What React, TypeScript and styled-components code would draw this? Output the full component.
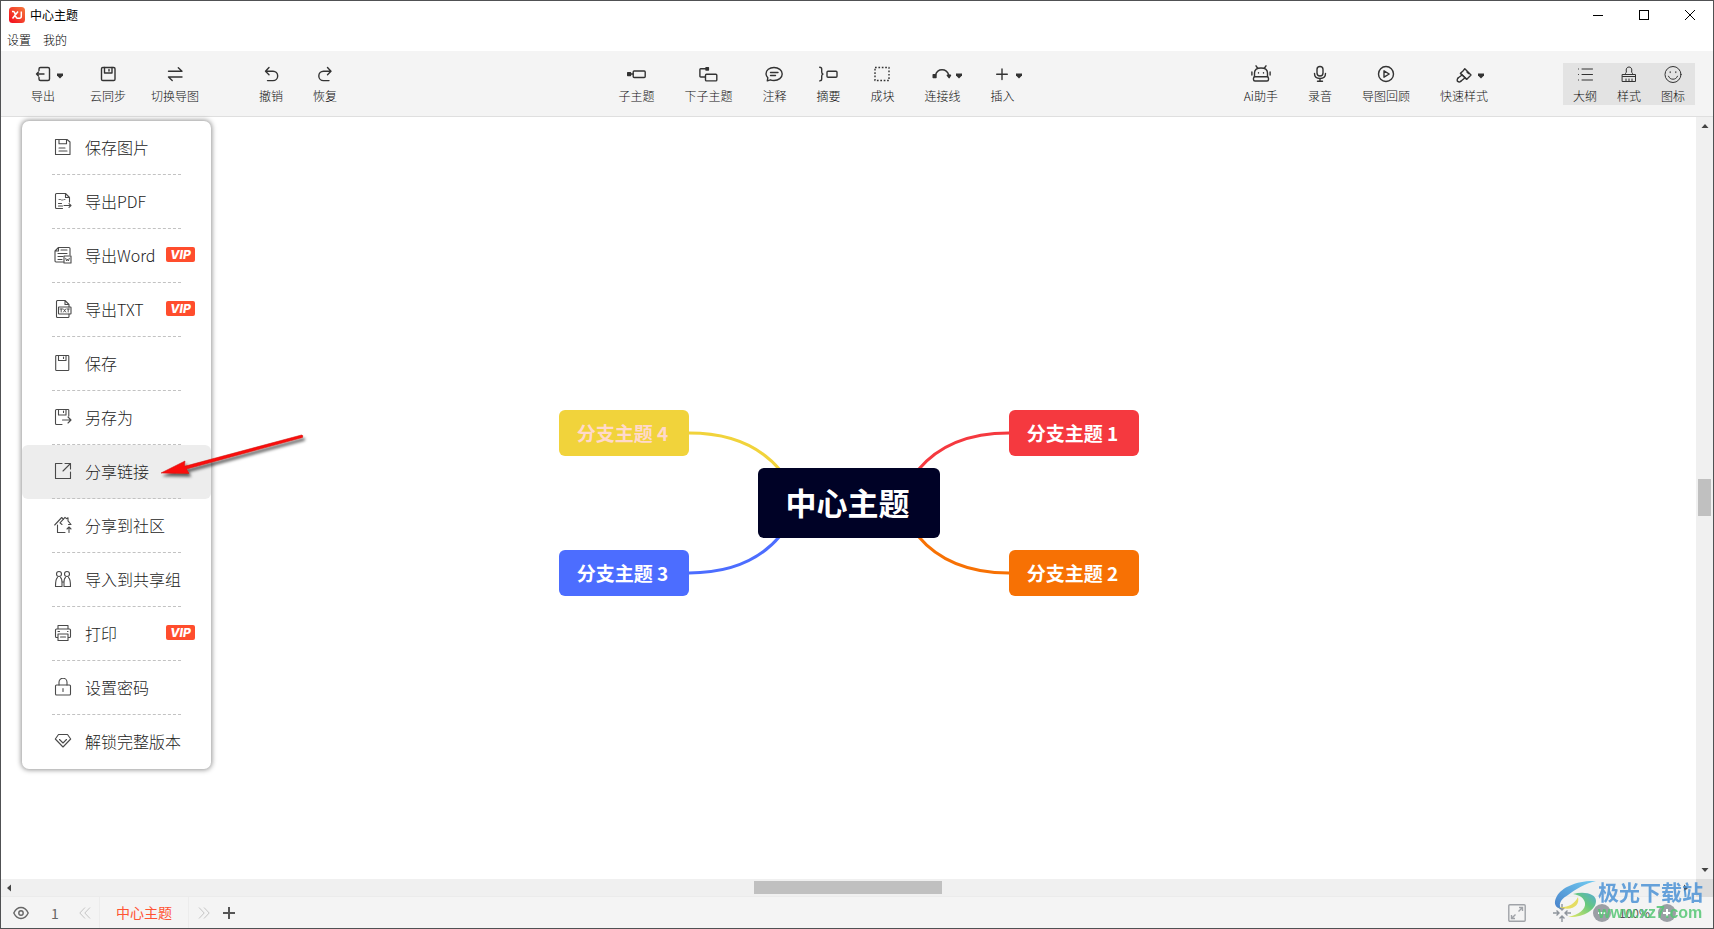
import React from "react";
import styled, { createGlobalStyle } from "styled-components";

const FONT = '"Noto Sans CJK SC", "Noto Sans", sans-serif';

const GlobalStyle = createGlobalStyle`
  *, *::before, *::after { box-sizing: border-box; }
  body { margin: 0; font-family: ${FONT}; color: #222; background: #fff; }
  button { font: inherit; color: inherit; background: none; border: 0; padding: 0; margin: 0; cursor: pointer; }
  svg { display: block; flex: none; }
`;

const Window = styled.div`
  display: flex;
  flex-direction: column;
  min-height: 100vh;
  border: 1px solid #505153;
  background: #fff;
`;

/* ---------- title and menu bar ---------- */

const TitleBar = styled.header`
  display: flex;
  align-items: center;
  height: 28px;
  padding-left: 8px;
`;

const Title = styled.h1`
  margin: 0 auto 0 5px;
  font-size: 12px;
  line-height: 16px;
  font-weight: 400;
  color: #000;
`;

const WindowButton = styled.button`
  display: flex;
  align-items: center;
  justify-content: center;
  width: 46px;
  height: 28px;
`;

const MenuBar = styled.nav`
  display: flex;
  gap: 12px;
  height: 22px;
  padding: 0 6px;
  font-size: 12px;
  font-weight: 300;
  line-height: 22px;
  color: #000;
`;

/* ---------- toolbar ---------- */

const Toolbar = styled.div`
  display: flex;
  align-items: center;
  height: 66px;
  padding: 0 18px 0 30px;
  background: #f4f4f4;
  border-bottom: 1px solid #dfdfdf;
`;

const ToolGroup = styled.div<{ $gap: number }>`
  display: flex;
  gap: ${(p) => p.$gap}px;
`;

const HistoryGroup = styled(ToolGroup)`
  margin-left: 60px;
`;

const CenterGroup = styled(ToolGroup)`
  flex: 1;
  justify-content: center;
  padding-left: 52px;
`;

const ToolButton = styled.button<{ $spaced?: boolean }>`
  display: flex;
  flex-direction: column;
  align-items: center;
  gap: 4px;
  margin-right: ${(p) => (p.$spaced ? 10 : 0)}px;
  font-size: 12px;
  font-weight: 300;
  line-height: 16px;
  white-space: nowrap;
  color: #111;
`;

const IconLine = styled.span`
  display: flex;
  align-items: center;
  justify-content: center;
  height: 20px;
`;

const Caret = styled.svg`
  margin: 4px -11px 0 3px;
`;

const PanelSwitch = styled.div`
  display: flex;
  height: 42px;
  margin-left: 75px;
  background: #e3e3e3;
`;

const PanelButton = styled(ToolButton)`
  width: 44px;
  padding-top: 1px;
`;

/* ---------- work area ---------- */

const Workspace = styled.main`
  flex: 1;
  display: grid;
  grid-template-columns: minmax(0, 1fr) 17px;
  grid-template-rows: minmax(0, 1fr) 18px;
  position: relative;
`;

const Canvas = styled.section`
  display: flex;
  align-items: center;
  justify-content: center;
  min-height: 662px;
  padding-top: 10px;
  background: #fff;
`;

const MindMap = styled.div`
  position: relative;
  width: 580px;
  height: 186px;
`;

const Links = styled.svg`
  position: absolute;
  inset: 0;
`;

const Topic = styled.div<{ $x: number; $y: number; $bg: string; $color: string }>`
  position: absolute;
  left: ${(p) => p.$x}px;
  top: ${(p) => p.$y}px;
  display: flex;
  align-items: center;
  justify-content: center;
  width: 130px;
  height: 46px;
  padding: 0 2px 1px 0;
  border-radius: 6px;
  background: ${(p) => p.$bg};
  color: ${(p) => p.$color};
  font-size: 19px;
  font-weight: 700;
  line-height: 28px;
  white-space: nowrap;
`;

const CentralTopic = styled(Topic)`
  width: 182px;
  height: 70px;
  padding-bottom: 2px;
  font-size: 31px;
  line-height: 46px;
`;

const VerticalBar = styled.div`
  display: flex;
  flex-direction: column;
  align-items: center;
  justify-content: space-between;
  padding-bottom: 1px;
  background: #f0f0f0;
`;

const HorizontalBar = styled.div`
  display: flex;
  align-items: center;
  justify-content: space-between;
  padding-right: 2px;
  background: #f0f0f0;
  border-bottom: 1px solid #ebebeb;
`;

const Corner = styled.div`
  background: #dcdcdc;
`;

const ScrollButton = styled.button`
  display: flex;
  align-items: center;
  justify-content: center;
  width: 16px;
  height: 17px;
`;

const Thumb = styled.div<{ $w: number; $h: number }>`
  width: ${(p) => p.$w}px;
  height: ${(p) => p.$h}px;
  background: #c0c0c0;
`;

/* ---------- export menu ---------- */

const ExportMenu = styled.ul`
  position: absolute;
  left: 21px;
  top: 4px;
  width: 189px;
  margin: 0;
  padding: 0;
  list-style: none;
  background: #fff;
  border-radius: 7px;
  box-shadow: 0 0 5px 1px rgba(0, 0, 0, 0.42);
`;

const MenuItem = styled.li<{ $active?: boolean }>`
  display: flex;
  flex-direction: column;
  height: 54px;
  border-radius: 6px;
  background: ${(p) => (p.$active ? "#ededed" : "transparent")};
`;

const MenuButton = styled.button`
  flex: 1;
  display: flex;
  align-items: center;
  padding: 0 16px 2px 32px;
  font-size: 16px;
  font-weight: 300;
  line-height: 24px;
  white-space: nowrap;
  color: #1c1c1c;
`;

const MenuLabel = styled.span`
  margin-left: 13px;
`;

const Divider = styled.hr`
  width: 129px;
  margin: 0 30px;
  border: 0;
  border-top: 1px dashed #c2c2c2;
`;

const Vip = styled.span`
  flex: none;
  width: 29px;
  height: 15px;
  margin-left: auto;
  border-radius: 2px;
  background: #ff4d2d;
  color: #fff;
  font: italic 800 12px/15px Inter, "Liberation Sans", sans-serif;
  text-align: center;
`;

const Pointer = styled.svg`
  position: absolute;
  left: 155px;
  top: 313px;
  pointer-events: none;
`;

/* ---------- status bar ---------- */

const StatusBar = styled.footer`
  position: relative;
  display: flex;
  align-items: center;
  height: 31px;
  padding: 0 37px 0 12px;
  background: #f4f4f4;
  color: #666;
`;

const StatusButton = styled.button`
  display: flex;
  align-items: center;
  justify-content: center;
`;

const PageNumber = styled.span`
  width: 50px;
  padding-left: 2px;
  text-align: center;
  font-size: 14px;
  line-height: 20px;
`;

const SheetTab = styled.button`
  width: 90px;
  height: 31px;
  margin-left: 8px;
  border: solid #ececec;
  border-width: 0 1px;
  font-size: 14px;
  line-height: 31px;
  color: #ff5333;
`;

const TabTools = styled.div`
  display: flex;
  gap: 13px;
  margin: 0 auto 0 9px;
`;

const ZoomTools = styled.div`
  display: flex;
  align-items: center;
`;

const CenterButton = styled(StatusButton)`
  margin: 0 22px 0 27px;
`;

const ZoomValue = styled.output`
  width: 47px;
  text-align: center;
  font-size: 12px;
  line-height: 16px;
  color: #555;
`;

const SiteMark = styled.div`
  position: absolute;
  right: 10px;
  bottom: 5px;
  display: flex;
  pointer-events: none;
  opacity: 0.85;
`;

const SiteText = styled.div`
  display: flex;
  flex-direction: column;
  margin-left: -2px;
  white-space: nowrap;
`;

const SiteName = styled.span`
  font-size: 21px;
  font-weight: 700;
  line-height: 24px;
  color: #4d93d6;
`;

const SiteUrl = styled.span`
  font: 700 16px/20px "Liberation Sans", sans-serif;
  color: #55c774;
`;

/* ---------- icons ---------- */

type IconProps = { size?: number; w?: number; color?: string; children: React.ReactNode };

const Icon = ({ size = 20, w = 1.4, color = "#333", children }: IconProps) => (
  <svg
    width={size}
    height={size}
    viewBox={`0 0 ${size} ${size}`}
    fill="none"
    stroke={color}
    strokeWidth={w}
    strokeLinecap="round"
    strokeLinejoin="round"
    aria-hidden="true"
  >
    {children}
  </svg>
);

const toolIcons: Record<string, React.ReactNode> = {
  export: (
    <>
      <path d="M6 6.500V5a1.500 1.500 0 0 1 1.500-1.500H15A1.500 1.500 0 0 1 16.500 5v10a1.500 1.500 0 0 1-1.500 1.500H7.500A1.500 1.500 0 0 1 6 15v-1.500" />
      <path d="M11 10H3.500M5.500 8l-2 2 2 2" />
    </>
  ),
  sync: (
    <>
      <rect x="3.500" y="3.500" width="13.500" height="13" rx="1.300" />
      <path d="M6.500 3.500V9h7.500V3.500M11 5.500v1.500" />
    </>
  ),
  swap: <path d="M3.500 7.200H17l-3.700-3.500M17 13H3.500l3.700 3.500" />,
  undo: <path d="M8 3.500L4.500 7.200l3.500 3.500M4.800 7.200h7.200a4.700 4.700 0 0 1 0 9.400H6.500" />,
  redo: <path d="M12.500 3.500L16 7.200l-3.500 3.500M15.700 7.200H8.500a4.700 4.700 0 0 0 0 9.400H14" />,
  sub: (
    <>
      <rect x="1.700" y="8.700" width="2.800" height="2.800" fill="#333" />
      <path d="M4 10h3" />
      <rect x="7.200" y="7" width="12" height="6.500" rx="1" />
    </>
  ),
  sibling: (
    <>
      <rect x="8" y="3.600" width="2.400" height="2.400" fill="#333" />
      <path d="M8 4.700H2.700a.8.8 0 0 0-.8.800v6.700a.8.8 0 0 0 .8.800h4.500" />
      <rect x="7.500" y="10.200" width="11.300" height="6.700" rx="1" />
    </>
  ),
  note: (
    <>
      <path d="M3.300 16.800l.5-3A6.700 6.700 0 0 1 2 10c0-3.800 3.400-6.500 8-6.500s8.200 2.700 8.200 6.500-3.600 6.500-8.200 6.500c-1.500 0-2.600-.2-3.600-.7z" />
      <path d="M6.500 8.500h7.500M6.500 11.500h5" />
    </>
  ),
  summary: (
    <>
      <path d="M1.700 3.300c1.800 0 2 .6 2 1.800v3c0 1 .4 1.700 1.300 2-.9.300-1.300 1-1.300 2v3c0 1.200-.2 1.800-2 1.800" />
      <rect x="9" y="7.200" width="10" height="6" rx="1" />
    </>
  ),
  block: <rect x="3" y="3.500" width="14" height="13" strokeDasharray="1.700 1.700" strokeLinecap="butt" />,
  relation: (
    <>
      <rect x="1.200" y="10.700" width="2.800" height="2.800" fill="#333" />
      <path d="M3.500 11C5.500 3.900 14.500 3.900 16.800 11" />
      <path d="M15.300 11.300h3.200l-1.400 2.400z" fill="#333" />
    </>
  ),
  insert: <path d="M10 5v10.500M4.700 10.200h10.600" />,
  robot: (
    <>
      <path d="M6.500 4L5 1.800M13.500 4L15 1.800" />
      <path d="M3.500 12.500V9c0-3 2.500-5 6.500-5s6.500 2 6.500 5v3.500" />
      <rect x="2.500" y="12.800" width="15" height="4.200" rx="1.500" />
      <path d="M7.500 8.700v.4M12.500 8.700v.4M.9 8v3M19.100 8v3" />
    </>
  ),
  mic: (
    <>
      <rect x="7" y="2.500" width="6" height="9.500" rx="3" />
      <path d="M4.500 9.500c0 3 2 5 5.500 5s5.500-2 5.500-5M10 14.500V17M7.500 17.200h5" />
    </>
  ),
  review: (
    <>
      <circle cx="10" cy="10" r="7.500" />
      <path d="M8 6.800v6.400l5.200-3.200z" />
    </>
  ),
  quick: (
    <>
      <path d="M10.800 4.700L17 11l-4.200 4.200-6.300-6 3-2.800z" />
      <path d="M6.500 9.500L12.500 15.200M7.800 11.200l-3.500 2.600M10.800 14l-4 3.200M13 8l1.500 1.500" />
      <path d="M4.300 13.800c-1.200 1-1.500 3-.6 3.600s2.300.6 3.100-.2" />
    </>
  ),
  outline: <path d="M7 5h10.500M7 10.500h10.500M7 16h10.500M3.500 5h.1M3.500 10.500h.1M3.500 16h.1" />,
  brush: (
    <>
      <path d="M3.500 10.500h13v7h-13zM6.500 10.500v-1c0-.6.300-1 .9-1.200L7.200 6c0-1.600 1-3 2.800-3s2.800 1.400 2.800 3l-.2 2.300c.6.2.9.6.9 1.200v1" />
      <path d="M3.500 12.500h13M7 15v2.500M10 15v2.500M13 15v2.500" />
    </>
  ),
  smile: (
    <>
      <circle cx="10" cy="10.500" r="8" />
      <path d="M5.500 12.200c.8 2 2.400 3 4.500 3s3.700-1 4.500-3M7.200 7.700v1M12.800 7.700v1" />
    </>
  ),
};

const menuIcons: Record<string, React.ReactNode> = {
  image: <path d="M1.500 1.500H13l3 2.500v12.500H1.500zM5 1.500v4.300h7.500V1.500M5 10h6M5 13h8" />,
  pdf: (
    <>
      <path d="M8.500 16.500h-6a1 1 0 0 1-1-1v-13a1 1 0 0 1 1-1h9l4 4V10M11.500 1.500v4h4M4.500 11.500h3M4.500 14h4M10 13.500h7M15 11.700l2 1.800-2 1.800" />
      <path d="M5 7.500h1.500M7.500 8h1.500M10 7.500h1" strokeWidth="0.800" />
    </>
  ),
  word: (
    <>
      <path d="M9.500 16H2a1 1 0 0 1-1-1V5l3.500-3.500H15a1 1 0 0 1 1 1V9M1 5h3.500V1.500M7 4h6M4 7.500h9M4 10.500h5M4 13.500h4" />
      <rect x="10" y="10" width="7" height="7" />
      <path d="M11.700 12.300l.9 2.700.9-2 .9 2 .9-2.700" strokeWidth="0.900" />
    </>
  ),
  txt: (
    <>
      <path d="M2.500 7V1.500a1 1 0 0 1 1-1h7.500l4 4V7M11 .5v4h4M2.500 13v3.500a1 1 0 0 0 1 1H14a1 1 0 0 0 1-1V14M2.500 7v6" />
      <rect x="4.500" y="7" width="12.500" height="7" rx="0.500" />
      <path d="M6 9h2.500M7.200 9v3M9.500 9l2.200 3M11.700 9L9.500 12M13 9h2.500M14.200 9v3" strokeWidth="0.900" />
    </>
  ),
  save: <path d="M2.500 1.500H14a.8.800 0 0 1 .8.800v13.400a.8.800 0 0 1-.8.800H2.500a.8.800 0 0 1-.8-.8V2.300a.8.800 0 0 1 .8-.8zM4.500 1.500v5h7.500v-5M9.500 3v1.500" />,
  saveAs: <path d="M8 16.500H2.500a1 1 0 0 1-1-1v-13a1 1 0 0 1 1-1H14a.8.800 0 0 1 .8.800V8M4.500 1.500v5.500H12V1.500M9.500 3v1.500M8.500 12h8.300M14 9l3 3-3 3" />,
  share: <path d="M8 1.500H1.500v15h15V10M11 1.500h5.500V7M16.500 1.500L9 9" />,
  community: (
    <>
      <path d="M3.500 9v7.500H11M.7 9l7-7.500L9.500 3.300M8 8.500L6 6.800 11 1.300l1.500 1.400L14 1.800v3l3 3.700h-2.500" />
      <path d="M15 16.500v-5M13 13l2-2 2 2" />
    </>
  ),
  group: (
    <>
      <circle cx="5" cy="4" r="2.500" />
      <circle cx="13" cy="4" r="2.500" />
      <path d="M3.500 7.500C2 8.500 1.500 10 1.500 16.500h2.500M6.500 7.500C8 8.500 8 11 8 12.500v4H4M11.500 7.500C10 8.500 10 11 10 12.500v4h6.500c0-6.500-.5-8-2-9M8 12h2" />
    </>
  ),
  print: <path d="M4 5V1.500h10V5M4 13.500H2.500a1 1 0 0 1-1-1V6a1 1 0 0 1 1-1h13a1 1 0 0 1 1 1v6.500a1 1 0 0 1-1 1H14M4 10h10v6.500H4zM4 7.500h1.500M13.500 7.500h.5M6.500 13h5" />,
  lock: (
    <>
      <rect x="1.500" y="7" width="15" height="10" rx="1" />
      <path d="M5 7V4.200a4 4 0 0 1 8 0V7M9 10.500v3" />
    </>
  ),
  gem: <path d="M4.500 2.500h9L16.700 7 9 15 1.300 7zM5.500 7.500L9 11l3.500-3.500" />,
};

type Tool = { id: string; label: string; caret?: boolean; spaced?: boolean };

const fileTools: Tool[] = [
  { id: "export", label: "导出", caret: true, spaced: true },
  { id: "sync", label: "云同步" },
  { id: "swap", label: "切换导图" },
];
const historyTools: Tool[] = [
  { id: "undo", label: "撤销" },
  { id: "redo", label: "恢复" },
];
const editTools: Tool[] = [
  { id: "sub", label: "子主题" },
  { id: "sibling", label: "下子主题" },
  { id: "note", label: "注释" },
  { id: "summary", label: "摘要" },
  { id: "block", label: "成块" },
  { id: "relation", label: "连接线", caret: true },
  { id: "insert", label: "插入", caret: true },
];
const extraTools: Tool[] = [
  { id: "robot", label: "Ai助手" },
  { id: "mic", label: "录音" },
  { id: "review", label: "导图回顾" },
  { id: "quick", label: "快速样式", caret: true },
];
const panelTools: Tool[] = [
  { id: "outline", label: "大纲" },
  { id: "brush", label: "样式" },
  { id: "smile", label: "图标" },
];

const menuItems = [
  { id: "image", label: "保存图片" },
  { id: "pdf", label: "导出PDF" },
  { id: "word", label: "导出Word", vip: true },
  { id: "txt", label: "导出TXT", vip: true },
  { id: "save", label: "保存" },
  { id: "saveAs", label: "另存为" },
  { id: "share", label: "分享链接", active: true },
  { id: "community", label: "分享到社区" },
  { id: "group", label: "导入到共享组" },
  { id: "print", label: "打印", vip: true },
  { id: "lock", label: "设置密码" },
  { id: "gem", label: "解锁完整版本" },
];

const topics = [
  { label: "分支主题 4", x: 0, y: 0, bg: "#f1d33b", color: "#ffd9cc" },
  { label: "分支主题 1", x: 450, y: 0, bg: "#f5393f", color: "#fff" },
  { label: "分支主题 3", x: 0, y: 140, bg: "#4c6dff", color: "#fff" },
  { label: "分支主题 2", x: 450, y: 140, bg: "#f77104", color: "#fff" },
];

const ToolItem = ({ tool }: { tool: Tool }) => (
  <ToolButton type="button" $spaced={tool.spaced}>
    <IconLine>
      <Icon>{toolIcons[tool.id]}</Icon>
      {tool.caret && (
        <Caret width="8" height="6" viewBox="0 0 8 6" aria-hidden="true">
          <path d="M1 .5h6v2L4 5.500 1 2.500z" fill="#333" />
        </Caret>
      )}
    </IconLine>
    {tool.label}
  </ToolButton>
);

const Arrow = ({ turn, label }: { turn: number; label: string }) => (
  <ScrollButton type="button" aria-label={label}>
    <svg width="8" height="8" viewBox="0 0 8 8">
      <path d="M.5 6L4 2l3.500 4z" fill="#444" transform={`rotate(${turn} 4 4)`} />
    </svg>
  </ScrollButton>
);

export default function App() {
  return (
    <>
      <GlobalStyle />
      <Window>
        <TitleBar>
          <svg width="16" height="16" viewBox="0 0 16 16" aria-hidden="true">
            <defs>
              <linearGradient id="logo" x1="0" y1="1" x2="1" y2="0">
                <stop offset="0" stopColor="#f4081c" />
                <stop offset="1" stopColor="#f47a3c" />
              </linearGradient>
            </defs>
            <rect width="16" height="16" rx="3.500" fill="url(#logo)" />
            <path
              d="M3 4.500h1.300c.8 0 1 .4 1.400 1.200l1.200 4c.3 1 .7 1.500 1.500 1.500h2c1.300 0 1.900-.8 1.900-2V4.500M9 4.500L3.500 11.500"
              fill="none"
              stroke="#fff"
              strokeWidth="1.500"
            />
          </svg>
          <Title>中心主题</Title>
          <WindowButton type="button" aria-label="最小化">
            <svg width="10" height="10" viewBox="0 0 10 10"><path d="M0 5.500h10" stroke="#000" /></svg>
          </WindowButton>
          <WindowButton type="button" aria-label="最大化">
            <svg width="10" height="10" viewBox="0 0 10 10"><rect x=".5" y=".5" width="9" height="9" fill="none" stroke="#000" /></svg>
          </WindowButton>
          <WindowButton type="button" aria-label="关闭">
            <svg width="10" height="10" viewBox="0 0 10 10"><path d="M0 0l10 10M10 0L0 10" stroke="#000" /></svg>
          </WindowButton>
        </TitleBar>
        <MenuBar>
          <button type="button">设置</button>
          <button type="button">我的</button>
        </MenuBar>
        <Toolbar>
          <ToolGroup $gap={25}>{fileTools.map((t) => <ToolItem key={t.id} tool={t} />)}</ToolGroup>
          <HistoryGroup $gap={30}>{historyTools.map((t) => <ToolItem key={t.id} tool={t} />)}</HistoryGroup>
          <CenterGroup $gap={30}>{editTools.map((t) => <ToolItem key={t.id} tool={t} />)}</CenterGroup>
          <ToolGroup $gap={30}>{extraTools.map((t) => <ToolItem key={t.id} tool={t} />)}</ToolGroup>
          <PanelSwitch>
            {panelTools.map((t) => (
              <PanelButton key={t.id} type="button">
                <Icon w={1}>{toolIcons[t.id]}</Icon>
                {t.label}
              </PanelButton>
            ))}
          </PanelSwitch>
        </Toolbar>

        <Workspace>
          <Canvas>
            <MindMap>
              <Links width="580" height="186" viewBox="0 0 580 186" fill="none" strokeWidth="3" aria-hidden="true">
                <path d="M130 23C168 23 200 35 221 60" stroke="#f1d33b" />
                <path d="M450 23C412 23 380 35 359 60" stroke="#f5393f" />
                <path d="M130 163C168 163 200 151 221 126" stroke="#4c6dff" />
                <path d="M450 163C412 163 380 151 359 126" stroke="#f77104" />
              </Links>
              {topics.map((t) => (
                <Topic key={t.label} $x={t.x} $y={t.y} $bg={t.bg} $color={t.color}>{t.label}</Topic>
              ))}
              <CentralTopic $x={199} $y={58} $bg="#000226" $color="#fff">中心主题</CentralTopic>
            </MindMap>
          </Canvas>
          <VerticalBar>
            <Arrow turn={0} label="向上滚动" />
            <Thumb $w={13} $h={37} />
            <Arrow turn={180} label="向下滚动" />
          </VerticalBar>
          <HorizontalBar>
            <Arrow turn={-90} label="向左滚动" />
            <Thumb $w={188} $h={13} />
            <Arrow turn={90} label="向右滚动" />
          </HorizontalBar>
          <Corner />

          <ExportMenu>
            {menuItems.map((m, i) => (
              <MenuItem key={m.id} $active={m.active}>
                <MenuButton type="button">
                  <Icon size={18} w={1.1} color="#4a4a4a">{menuIcons[m.id]}</Icon>
                  <MenuLabel>{m.label}</MenuLabel>
                  {m.vip && <Vip>VIP</Vip>}
                </MenuButton>
                {i < menuItems.length - 1 && <Divider />}
              </MenuItem>
            ))}
          </ExportMenu>
          <Pointer width="160" height="60" viewBox="0 0 160 60" aria-hidden="true">
            <defs>
              <filter id="drop" x="-10%" y="-20%" width="120%" height="160%">
                <feDropShadow dx="2" dy="3" stdDeviation="1.800" floodColor="#000" floodOpacity="0.600" />
              </filter>
            </defs>
            <path d="M5 43L29 31 28.500 36.300 145.500 5Q147.500 5 146.500 7.500L30.500 39 33 43.500z" fill="#fb0f0a" stroke="#c80d08" strokeWidth=".5" filter="url(#drop)" />
          </Pointer>
        </Workspace>

        <StatusBar>
          <StatusButton type="button" aria-label="预览">
            <svg width="16" height="14" viewBox="0 0 16 14" fill="none" stroke="#666" strokeWidth="1.400">
              <path d="M.8 7C2.500 3.500 5 1.500 8 1.500S13.500 3.500 15.200 7C13.500 10.500 11 12.500 8 12.500S2.500 10.500.8 7z" />
              <circle cx="8" cy="7" r="2.200" />
            </svg>
          </StatusButton>
          <PageNumber>1</PageNumber>
          <StatusButton type="button" aria-label="上一页">
            <svg width="12" height="12" viewBox="0 0 12 12" fill="none" stroke="#c4c4c4"><path d="M6 .5L.8 6 6 11.500M11 .5L5.800 6l5.200 5.500" /></svg>
          </StatusButton>
          <SheetTab type="button">中心主题</SheetTab>
          <TabTools>
            <StatusButton type="button" aria-label="下一页">
              <svg width="12" height="12" viewBox="0 0 12 12" fill="none" stroke="#c4c4c4"><path d="M1 .5L6.200 6 1 11.500M6 .5L11.200 6 6 11.500" /></svg>
            </StatusButton>
            <StatusButton type="button" aria-label="新建画布">
              <svg width="12" height="12" viewBox="0 0 12 12" stroke="#555" strokeWidth="2"><path d="M0 6h12M6 0v12" /></svg>
            </StatusButton>
          </TabTools>
          <ZoomTools>
            <StatusButton type="button" aria-label="全屏">
              <svg width="18" height="18" viewBox="0 0 18 18" fill="none" stroke="#a0a3a8" strokeWidth="1.400">
                <rect x=".8" y=".8" width="16.400" height="16.400" rx="1" />
                <path d="M10.500 7.500l4-4M11 3.500h3.500V7M7.500 10.500l-4 4M3.500 11v3.500H7" />
              </svg>
            </StatusButton>
            <CenterButton type="button" aria-label="居中">
              <svg width="18" height="18" viewBox="0 0 18 18" fill="none" stroke="#8f959c" strokeWidth="1.400">
                <path d="M0 9h6M3.500 6.500L6 9l-2.500 2.500M18 9h-6M14.500 6.500L12 9l2.500 2.500M9 0v6M6.500 3.500L9 6l2.500-2.500M9 18v-6M6.500 14.500L9 12l2.500 2.500" />
              </svg>
            </CenterButton>
            <StatusButton type="button" aria-label="缩小">
              <svg width="18" height="18" viewBox="0 0 18 18"><circle cx="9" cy="9" r="9" fill="#9b9fa5" /><path d="M5 9h8" stroke="#fff" strokeWidth="2" /></svg>
            </StatusButton>
            <ZoomValue>100%</ZoomValue>
            <StatusButton type="button" aria-label="放大">
              <svg width="18" height="18" viewBox="0 0 18 18"><circle cx="9" cy="9" r="9" fill="#9b9fa5" /><path d="M5 9h8M9 5v8" stroke="#fff" strokeWidth="2" /></svg>
            </StatusButton>
          </ZoomTools>
          <SiteMark>
            <svg width="46" height="44" viewBox="0 0 46 44" aria-hidden="true">
              <defs>
                <linearGradient id="sky" x1="0" y1="1" x2="1" y2="0">
                  <stop offset="0" stopColor="#2c6fc4" />
                  <stop offset="1" stopColor="#5cc6f2" />
                </linearGradient>
                <linearGradient id="leaf" x1="0" y1="1" x2="1" y2="0">
                  <stop offset="0" stopColor="#e5e84a" />
                  <stop offset=".6" stopColor="#4fc16b" />
                  <stop offset="1" stopColor="#3a9fd0" />
                </linearGradient>
              </defs>
              <path d="M42 2C24 1 8 8 3 17c-4 7-2 12 4 13-3-5 0-10 7-14C22 10 32 4 42 2z" fill="url(#sky)" />
              <path d="M19 15c12-3 23 0 23 7 0 9-13 17-28 16 11-2 18-8 17-14-1-5-5-8-12-9z" fill="url(#leaf)" />
              <path d="M4 28c9 1 16-2 20-10 2 8-5 15-20 10z" fill="#e3d94a" />
            </svg>
            <SiteText>
              <SiteName>极光下载站</SiteName>
              <SiteUrl>www.xz7.com</SiteUrl>
            </SiteText>
          </SiteMark>
        </StatusBar>
      </Window>
    </>
  );
}
